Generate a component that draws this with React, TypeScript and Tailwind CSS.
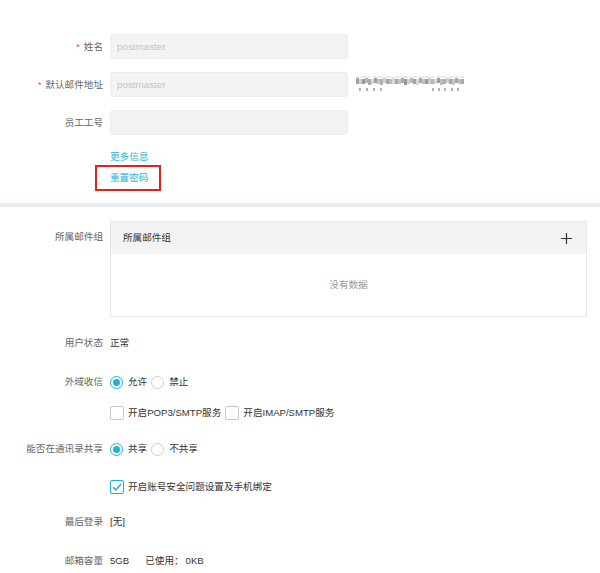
import type { ReactNode } from "react";

const CYAN = "#1fb4da";

function Label({ children, required }: { children: ReactNode; required?: boolean }) {
  return (
    <div className="flex w-[103px] shrink-0 items-center justify-end text-[#666]">
      {required && <span className="mr-[4px] text-[9px] text-[#f04134]">*</span>}
      {children}
    </div>
  );
}

function Row({ label, required, className = "", children }: { label?: string; required?: boolean; className?: string; children?: ReactNode }) {
  return (
    <div className={`flex items-center gap-[7px] ${className}`}>
      <Label required={required}>{label}</Label>
      <div className="flex min-w-0 flex-1 items-center">{children}</div>
    </div>
  );
}

function Field({ value }: { value?: string }) {
  return (
    <div className="flex h-[25px] w-[238px] items-center rounded-[3px] border border-[#ececec] bg-[#f3f3f3] px-[6px] font-['Liberation_Sans',sans-serif] text-[9.8px] text-[#c4c4c4]">
      {value}
    </div>
  );
}

function Radio({ checked, children }: { checked?: boolean; children: ReactNode }) {
  return (
    <span className="mr-[4px] flex items-center gap-[5px]">
      <span
        className={`flex h-[13px] w-[13px] items-center justify-center rounded-full border bg-white ${checked ? "border-[#1fb4da]" : "border-[#cfcfcf]"}`}
      >
        {checked && <span className="h-[7px] w-[7px] rounded-full bg-[#1fb4da]" />}
      </span>
      <span className="text-[#333]">{children}</span>
    </span>
  );
}

function Check({ checked, children }: { checked?: boolean; children: ReactNode }) {
  return (
    <span className="mr-[4px] flex items-center gap-[4px]">
      <span
        className={`flex h-[14px] w-[14px] items-center justify-center rounded-[2px] border bg-white ${checked ? "border-[#1fb4da]" : "border-[#c9c9c9]"}`}
      >
        {checked && (
          <svg width="10" height="8" viewBox="0 0 10 8" fill="none">
            <path d="M1 4.2 L3.8 7 L9 1" stroke={CYAN} strokeWidth="1.6" />
          </svg>
        )}
      </span>
      <span className="text-[#333]">{children}</span>
    </span>
  );
}

// pixelated (censored) domain next to the address field
const MOSAIC = [
  "#9a9a9a", "#c8c8c8", "#8f8f8f", "#b0b0b0", "#a3a3a3", "#d0d0d0", "#959595", "#bdbdbd",
  "#a8a8a8", "#cfcfcf", "#9c9c9c", "#b8b8b8", "#d5d5d5", "#9e9e9e", "#c2c2c2", "#a5a5a5",
  "#8d8d8d", "#cacaca", "#b3b3b3", "#999999", "#d2d2d2", "#a0a0a0", "#bbbbbb", "#929292",
  "#c5c5c5", "#adadad", "#d8d8d8", "#969696", "#b6b6b6", "#a6a6a6", "#cdcdcd", "#9b9b9b",
  "#c0c0c0", "#9f9f9f", "#b9b9b9", "#a2a2a2",
];

function Mosaic() {
  return (
    <svg width="112" height="18" viewBox="0 0 112 18" className="ml-[8px] opacity-90">
      {MOSAIC.map((c, i) => (
        <rect key={i} x={i * 3} y={i % 3 === 0 ? 2 : 3} width="3" height={i % 4 === 0 ? 6 : 5} fill={c} />
      ))}
      {MOSAIC.map((c, i) => (
        <rect key={"b" + i} x={i * 3} y={0} width="3" height="2" fill={c} opacity="0.25" />
      ))}
      {[3, 10, 17, 24, 76, 82, 88, 95, 101].map((x) => (
        <rect key={x} x={x} y="12" width="2" height="3" fill="#a9a9a9" />
      ))}
    </svg>
  );
}

export default function App() {
  return (
    <div className="min-h-[573px] w-[600px] bg-white pt-[34px] font-['Liberation_Sans','Noto_Sans_CJK_SC',sans-serif] text-[9.6px] leading-[20px]">
      <Row label="姓名" required>
        <Field value="postmaster" />
      </Row>
      <Row label="默认邮件地址" required className="relative mt-[13px]">
        <Field value="postmaster" />
        <span className="absolute left-[324px] top-[-7px] text-[6px] leading-none tracking-[2px] text-[#d6d6d6]">····</span>
        <Mosaic />
      </Row>
      <Row label="员工工号" className="mt-[13px]">
        <Field />
      </Row>

      <div className="mt-[14px] pl-[110px] leading-[16px]" style={{ color: CYAN }}>
        更多信息
      </div>
      <div className="pl-[95px]">
        <div className="flex h-[26px] w-[66px] items-center border-2 border-[#e2231a] pl-[13px]" style={{ color: CYAN }}>
          重置密码
        </div>
      </div>

      <div className="mt-[12px] h-[4px] bg-[#e9edf1]" />

      <div className="mt-[14px] flex gap-[7px]">
        <div className="flex h-[32px] w-[103px] shrink-0 items-center justify-end text-[#666]">所属邮件组</div>
        <div className="w-[477px] border border-[#e6e6e6]">
          <div className="flex h-[32px] items-center justify-between bg-[#f3f3f3] pl-[12px] pr-[14px] text-[#333]">
            <span>所属邮件组</span>
            <svg width="11" height="11" viewBox="0 0 11 11">
              <path d="M5.5 0 V11 M0 5.5 H11" stroke="#333" strokeWidth="1.2" />
            </svg>
          </div>
          <div className="flex h-[62px] items-center justify-center text-[#999]">没有数据</div>
        </div>
      </div>

      <Row label="用户状态" className="mt-[16px]">
        <span className="text-[#333]">正常</span>
      </Row>
      <Row label="外域收信" className="mt-[19px]">
        <Radio checked>允许</Radio>
        <Radio>禁止</Radio>
      </Row>
      <Row className="mt-[11px]">
        <Check>开启POP3/SMTP服务</Check>
        <Check>开启IMAP/SMTP服务</Check>
      </Row>
      <Row label="能否在通讯录共享" className="mt-[16px]">
        <Radio checked>共享</Radio>
        <Radio>不共享</Radio>
      </Row>
      <Row className="mt-[18px]">
        <Check checked>开启账号安全问题设置及手机绑定</Check>
      </Row>
      <Row label="最后登录" className="mt-[15px]">
        <span className="text-[#333]">[无]</span>
      </Row>
      <Row label="邮箱容量" className="mt-[19px]">
        <span className="text-[#333]">5GB</span>
        <span className="ml-[16px] text-[#333]">已使用：</span>
        <span className="ml-[2px] text-[#333]">0KB</span>
      </Row>
    </div>
  );
}
